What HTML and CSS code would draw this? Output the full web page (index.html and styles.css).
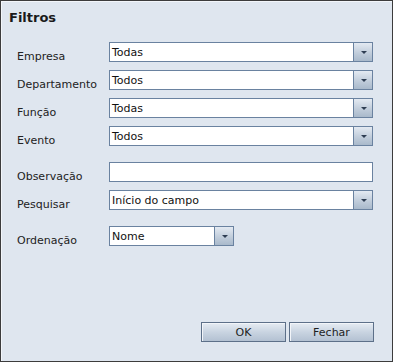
FILE: index.html
```html
<!DOCTYPE html>
<html lang="pt">
<head>
  <meta charset="UTF-8">
  <title>Filtros</title>
  <link rel="stylesheet" href="styles.css">
</head>
<body>
  <div class="dialog">
    <div class="dialog-title">Filtros</div>

    <div class="form">
      <div class="group">
        <div class="row">
          <label class="row-label">Empresa</label>
          <div class="combo"><span class="combo-value">Todas</span><span class="combo-btn"></span></div>
        </div>
        <div class="row">
          <label class="row-label">Departamento</label>
          <div class="combo"><span class="combo-value">Todos</span><span class="combo-btn"></span></div>
        </div>
        <div class="row">
          <label class="row-label">Função</label>
          <div class="combo"><span class="combo-value">Todas</span><span class="combo-btn"></span></div>
        </div>
        <div class="row">
          <label class="row-label">Evento</label>
          <div class="combo"><span class="combo-value">Todos</span><span class="combo-btn"></span></div>
        </div>
      </div>

      <div class="group">
        <div class="row">
          <label class="row-label">Observação</label>
          <div class="text-input"></div>
        </div>
        <div class="row">
          <label class="row-label">Pesquisar</label>
          <div class="combo"><span class="combo-value">Início do campo</span><span class="combo-btn"></span></div>
        </div>
      </div>

      <div class="group">
        <div class="row">
          <label class="row-label">Ordenação</label>
          <div class="combo combo-small"><span class="combo-value">Nome</span><span class="combo-btn"></span></div>
        </div>
      </div>
    </div>

    <div class="actions">
      <button class="btn">OK</button>
      <button class="btn">Fechar</button>
    </div>
  </div>
</body>
</html>
```

FILE: styles.css
```css
:root {
  --bg: #dfe6ef;
  --field-border: #6a82a0;
  --text: #1e1e1e;
}
body {
  margin: 0;
  font-family: 'DejaVu Sans', Verdana, sans-serif;
  font-size: 11px;
  color: var(--text);
}
.dialog {
  width: 393px;
  height: 362px;
  box-sizing: border-box;
  background: var(--bg);
  border: 1px solid #3c3c3c;
  box-shadow: inset 1px 1px 0 #f3f6fa;
  display: flex;
  flex-direction: column;
}
.dialog-title {
  padding: 9px 0 0 8px;
  font-size: 13px;
  line-height: 16px;
  font-weight: bold;
  color: #1a1a1a;
}
.form {
  margin-top: 16px;
  padding-left: 16px;
  display: flex;
  flex-direction: column;
  gap: 16px;
}
.group {
  display: flex;
  flex-direction: column;
  gap: 8px;
}
.row {
  display: flex;
  height: 20px;
}
.row-label {
  width: 92px;
  flex: none;
  margin-top: 8px;
  line-height: 13px;
  white-space: nowrap;
  color: #222;
}
.combo,
.text-input {
  width: 264px;
  height: 20px;
  box-sizing: border-box;
  border: 1px solid var(--field-border);
  background: #fff;
  display: flex;
}
.combo-small {
  width: 125px;
}
.combo-value {
  flex: 1;
  padding: 1px 0 0 2px;
  line-height: 17px;
  white-space: nowrap;
  overflow: hidden;
  color: #111;
}
.combo-btn {
  width: 18px;
  flex: none;
  border-left: 1px solid var(--field-border);
  background: linear-gradient(#e4eaf2, #c1cddb 55%, #a9b9cb);
  position: relative;
}
.combo-btn::after {
  content: '';
  position: absolute;
  left: 7px;
  top: 8px;
  border-left: 3px solid transparent;
  border-right: 3px solid transparent;
  border-top: 3px solid #2e3d52;
}
.actions {
  margin-top: auto;
  padding: 0 18px 19px 0;
  display: flex;
  justify-content: flex-end;
  gap: 3px;
}
.btn {
  width: 85px;
  height: 20px;
  box-sizing: border-box;
  border: 1px solid #5d7089;
  box-shadow: inset 1px 1px 0 #f2f5f9;
  background: linear-gradient(#e6ecf3, #c9d4e1 50%, #b3c1d2);
  font-family: inherit;
  font-size: 11px;
  color: #1e1e1e;
  padding: 0;
  cursor: pointer;
}
```
